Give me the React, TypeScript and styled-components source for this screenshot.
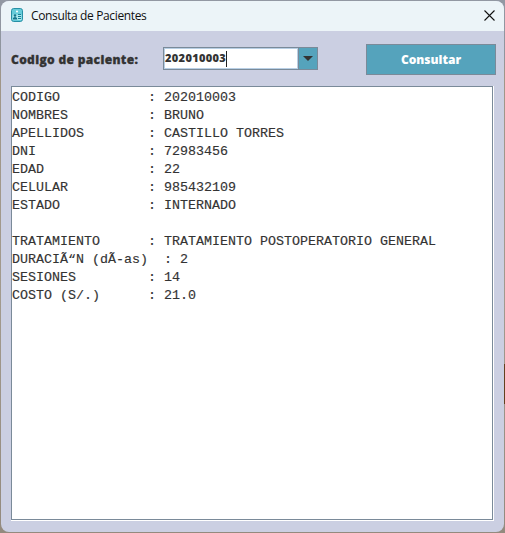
import React from 'react';
import styled, { createGlobalStyle } from 'styled-components';

const GlobalStyle = createGlobalStyle`
  * { box-sizing: border-box; }
  body { margin: 0; overflow: hidden; }
`;

const Desktop = styled.div`
  width: 505px;
  height: 533px;
  padding: 1px;
  background:
    linear-gradient(#63411f, #63411f) 504px 364px / 1px 40px no-repeat,
    linear-gradient(#9298a3 0, #8f959e 55px, #a09688 75px, #a29a8e 300px, #938a7e 533px);
`;

const Window = styled.main`
  display: flex;
  flex-direction: column;
  width: 503px;
  height: 531px;
  overflow: hidden;
  border-radius: 8px;
  background: #cbcfe2;
`;

const TitleBar = styled.header`
  display: flex;
  flex: none;
  align-items: center;
  height: 30px;
  padding: 0 9px 2px 10px;
  background: #ecf4f8;
  svg { display: block; flex: none; }
`;

const Title = styled.h1`
  flex: 1;
  margin: 2px 0 0 8px;
  font: 400 12px/18px "Open Sans", sans-serif;
  letter-spacing: -0.36px;
  color: #111;
  white-space: nowrap;
`;

const CloseButton = styled.button`
  display: flex;
  padding: 0;
  border: 0;
  background: none;
`;

const SearchForm = styled.form`
  display: flex;
  flex: none;
  align-items: center;
  height: 55px;
  padding: 2px 8px 0 10px;
  font: 800 12px/16px "Open Sans", sans-serif;
`;

const Label = styled.label`
  width: 152px;
  color: #333;
  white-space: nowrap;
  letter-spacing: 0.34px;
  -webkit-text-stroke: 0.3px #333;
`;

const Combo = styled.div`
  display: flex;
  width: 155px;
  height: 23px;
  margin-top: -2px;
  border: 1px solid #7a8a99;
`;

const ComboValue = styled.div`
  display: flex;
  flex: 1;
  border: 1px solid #b8cfe5;
  background: #fff;
  color: #333;
  font-size: 11px;
  line-height: 18px;
  letter-spacing: 0.35px;
`;

const Caret = styled.span`
  width: 1px;
  height: 16px;
  margin-top: 2px;
  background: #222;
`;

const ComboArrow = styled.div`
  display: flex;
  align-items: center;
  justify-content: center;
  width: 19px;
  border-left: 1px solid #7a8a99;
  background: #55a3bc;
`;

const QueryButton = styled.button`
  width: 130px;
  height: 31px;
  margin-left: auto;
  padding: 0;
  border: 1px solid #7a8a99;
  background: #55a3bc;
  color: #fff;
  font: inherit;
`;

const ResultFrame = styled.section`
  width: 483px;
  height: 435px;
  margin-left: 10px;
  border: solid #fff;
  border-width: 0 1px 1px 0;
`;

const Result = styled.pre`
  width: 100%;
  height: 100%;
  margin: 0;
  padding: 2px 0 0;
  border: 1px solid #7a8a99;
  background: #fff;
  color: #333;
  font: 400 13.333px/18px "Liberation Mono", monospace;
  -webkit-text-stroke: 0.15px #333;
`;

const fields: [string, string][] = [
  ['CODIGO', '202010003'],
  ['NOMBRES', 'BRUNO'],
  ['APELLIDOS', 'CASTILLO TORRES'],
  ['DNI', '72983456'],
  ['EDAD', '22'],
  ['CELULAR', '985432109'],
  ['ESTADO', 'INTERNADO'],
  ['', ''],
  ['TRATAMIENTO', 'TRATAMIENTO POSTOPERATORIO GENERAL'],
  ['DURACIÃ“N (dÃ-as)  ', '2'],
  ['SESIONES', '14'],
  ['COSTO (S/.)', '21.0'],
];

const report = fields
  .map(([name, value]) => (name ? `${name.padEnd(17)}: ${value}` : ''))
  .join('\n');

const PatientIcon = () => (
  <svg width="12" height="14" viewBox="0 0 12 14">
    <rect x=".5" y=".5" width="11" height="13" rx="2.2" fill="#65cbd9" stroke="#268fa5" />
    <rect x="5" y="2.5" width="2" height="2" rx="1" fill="#fff" />
    <path d="M1.5 6.5h9v5.5h-9z" fill="#a9e8ed" />
    <circle cx="4" cy="7.5" r="1.3" fill="#14748b" />
    <path d="M1.8 11.5c0-3.2 4.4-3.2 4.4 0z" fill="#14748b" />
    <path d="M7 6.5h3M7 8.5h3M7 10.5h3" stroke="#168099" />
  </svg>
);

export default function App() {
  return (
    <>
      <GlobalStyle />
      <Desktop>
        <Window>
          <TitleBar>
            <PatientIcon />
            <Title>Consulta de Pacientes</Title>
            <CloseButton aria-label="Cerrar">
              <svg width="11" height="11" viewBox="0 0 11 11">
                <path d="M.5.5l10 10M10.5.5l-10 10" stroke="#111" strokeWidth="1.1" />
              </svg>
            </CloseButton>
          </TitleBar>
          <SearchForm>
            <Label>Codigo de paciente:</Label>
            <Combo>
              <ComboValue>
                202010003
                <Caret />
              </ComboValue>
              <ComboArrow>
                <svg width="10" height="5" viewBox="0 0 10 5">
                  <path d="M0 0h10L5 5z" fill="#333" />
                </svg>
              </ComboArrow>
            </Combo>
            <QueryButton type="button">Consultar</QueryButton>
          </SearchForm>
          <ResultFrame>
            <Result>{report}</Result>
          </ResultFrame>
        </Window>
      </Desktop>
    </>
  );
}
